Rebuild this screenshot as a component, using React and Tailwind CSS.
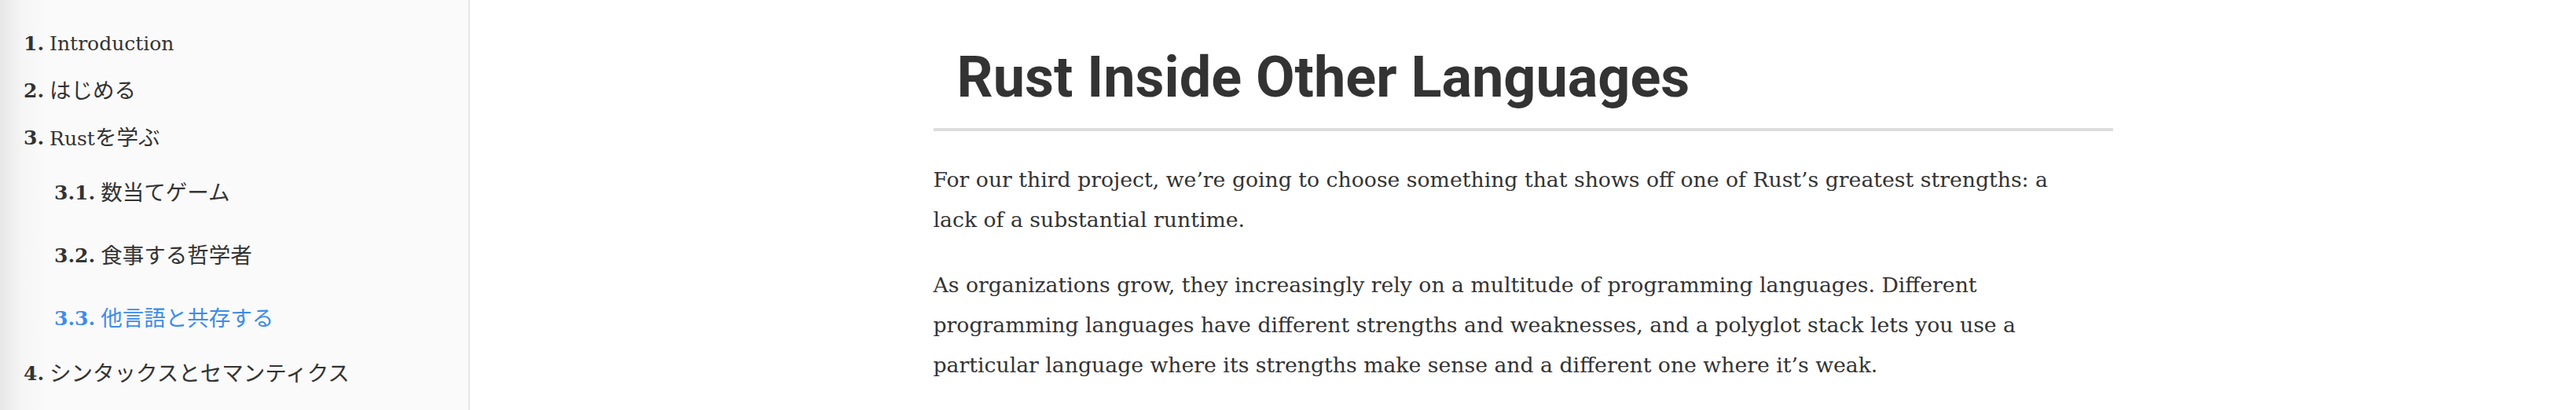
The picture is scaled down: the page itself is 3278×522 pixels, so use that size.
export default function App() {
  const serif = { fontFamily: '"DejaVu Serif", "Noto Sans CJK JP", serif' };
  const J = ({ children }) => <span className="text-[27.5px]">{children}</span>;
  const top = [
    { n: "1.", t: <span>Introduction</span> },
    { n: "2.", t: <J>はじめる</J> },
    { n: "3.", t: <span>Rust<J>を学ぶ</J></span> },
  ];
  const sub = [
    { n: "3.1.", t: <J>数当てゲーム</J> },
    { n: "3.2.", t: <J>食事する哲学者</J> },
    { n: "3.3.", t: <J>他言語と共存する</J>, active: true },
  ];
  return (
    <div className="flex h-[522px] w-full overflow-hidden bg-white text-[#333]">
      <nav
        className="w-[598px] shrink-0 border-r-2 border-[#e6e6e6] bg-[linear-gradient(to_right,#e7e7e7,#f6f6f6_30px,#fafafa_60px)] pt-[26px] text-[25px]"
        style={serif}
      >
        {top.map((i) => (
          <div key={i.n} className="flex h-[60px] items-center pl-[30px]">
            <span className="mr-[7px] font-bold">{i.n}</span>
            {i.t}
          </div>
        ))}
        {sub.map((i) => (
          <div
            key={i.n}
            className={`flex h-[80px] items-center pl-[69px] ${i.active ? "text-[#3d8ceb]" : ""}`}
          >
            <span className="mr-[7px] font-bold">{i.n}</span>
            {i.t}
          </div>
        ))}
        <div className="flex h-[60px] items-center pl-[30px]">
          <span className="mr-[7px] font-bold">4.</span>
          <J>シンタックスとセマンティクス</J>
        </div>
      </nav>
      <main className="flex flex-1 justify-center">
        <div className="w-[1501px]">
          <h1
            className="mt-[63px] border-b-4 border-[#dddddd] pb-[28px] pl-[30px] text-[72px] font-bold leading-none text-[#333]"
            style={{ fontFamily: 'Roboto, "Open Sans", sans-serif' }}
          >
            Rust Inside Other Languages
          </h1>
          <div className="mt-[36px] text-[26.7px] leading-[51px]" style={serif}>
            <p>
              For our third project, we’re going to choose something that shows off one of Rust’s greatest strengths: a
              <br />
              lack of a substantial runtime.
            </p>
            <p className="mt-[32px]">
              As organizations grow, they increasingly rely on a multitude of programming languages. Different
              <br />
              programming languages have different strengths and weaknesses, and a polyglot stack lets you use a
              <br />
              particular language where its strengths make sense and a different one where it’s weak.
            </p>
          </div>
        </div>
      </main>
    </div>
  );
}
